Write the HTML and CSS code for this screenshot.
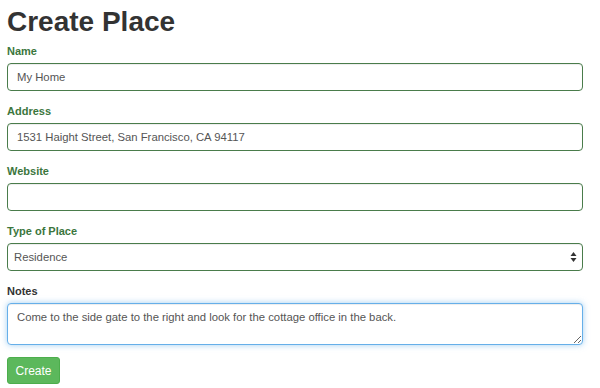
FILE: index.html
```html
<!DOCTYPE html>
<html lang="en">
<head>
    <meta charset="UTF-8">
    <meta name="viewport" content="width=device-width, initial-scale=1.0">
    <title>Create Place</title>
    <link rel="stylesheet" href="styles.css">
</head>
<body>
    <div class="container">
        <h1>Create Place</h1>
        <form id="place-form" action="/places" method="POST">
            <div class="form-group has-success">
                <label for="name">Name</label>
                <input type="text" id="name" class="form-control" value="My Home">
            </div>

            <div class="form-group has-success">
                <label for="address">Address</label>
                <input type="text" id="address" class="form-control" value="1531 Haight Street, San Francisco, CA 94117">
            </div>

            <div class="form-group has-success">
                <label for="website">Website</label>
                <input type="text" id="website" class="form-control" value="">
            </div>

            <div class="form-group has-success">
                <label for="type">Type of Place</label>
                <div class="select-wrap">
                    <select id="type" class="form-control">
                        <option value="residence">Residence</option>
                        <option value="business">Business</option>
                        <option value="other">Other</option>
                    </select>
                    <svg class="select-arrows" width="7" height="12" viewBox="0 0 7 12">
                        <path d="M3.5 1 L6.5 5 L0.5 5 Z" fill="#333"/>
                        <path d="M3.5 11 L6.5 7 L0.5 7 Z" fill="#333"/>
                    </svg>
                </div>
            </div>

            <div class="form-group">
                <label for="notes">Notes</label>
                <textarea id="notes" class="form-control focused" rows="2">Come to the side gate to the right and look for the cottage office in the back.</textarea>
            </div>

            <button type="submit" class="btn-success">Create</button>
        </form>
    </div>
</body>
</html>
```

FILE: styles.css
```css
body {
    margin: 0;
    font-family: 'Liberation Sans', Arial, sans-serif;
    font-size: 12px;
    line-height: 1.42857;
    color: #333;
    background-color: #fff;
}
.container {
    width: 576px;
    padding: 6px 7px 0;
}
h1 {
    font-size: 28px;
    font-weight: bold;
    line-height: 32px;
    margin: 0 0 5px;
    color: #333;
}
.form-group {
    margin-bottom: 12px;
}
label {
    display: block;
    font-size: 11px;
    font-weight: bold;
    line-height: 16px;
    margin-bottom: 4px;
}
.form-control {
    display: block;
    width: 100%;
    height: 28px;
    box-sizing: border-box;
    padding: 5px 9px;
    font-family: 'Liberation Sans', Arial, sans-serif;
    font-size: 11.3px;
    line-height: 16px;
    color: #555;
    background-color: #fff;
    border: 1px solid #ccc;
    border-radius: 4px;
    box-shadow: inset 0 1px 1px rgba(0, 0, 0, .075);
    margin: 0;
}
.has-success label {
    color: #3c763d;
}
.has-success .form-control {
    border-color: #4a7c4b;
}
.select-wrap {
    position: relative;
}
select.form-control {
    -webkit-appearance: none;
    appearance: none;
    padding-left: 6px;
}
.select-arrows {
    position: absolute;
    right: 6px;
    top: 8px;
}
textarea.form-control {
    height: 42px;
    resize: vertical;
    padding-top: 5px;
}
.focused {
    border-color: #66afe9;
    box-shadow: inset 0 1px 1px rgba(0, 0, 0, .075), 0 0 6px rgba(102, 175, 233, .6);
    outline: 0;
}
.btn-success {
    display: block;
    width: 53px;
    height: 27px;
    padding: 0;
    font-family: 'Liberation Sans', Arial, sans-serif;
    font-size: 12px;
    color: #fff;
    background-color: #5cb85c;
    border: 1px solid #4cae4c;
    border-radius: 3px;
    cursor: pointer;
}
.btn-success:hover {
    background-color: #449d44;
}
```
